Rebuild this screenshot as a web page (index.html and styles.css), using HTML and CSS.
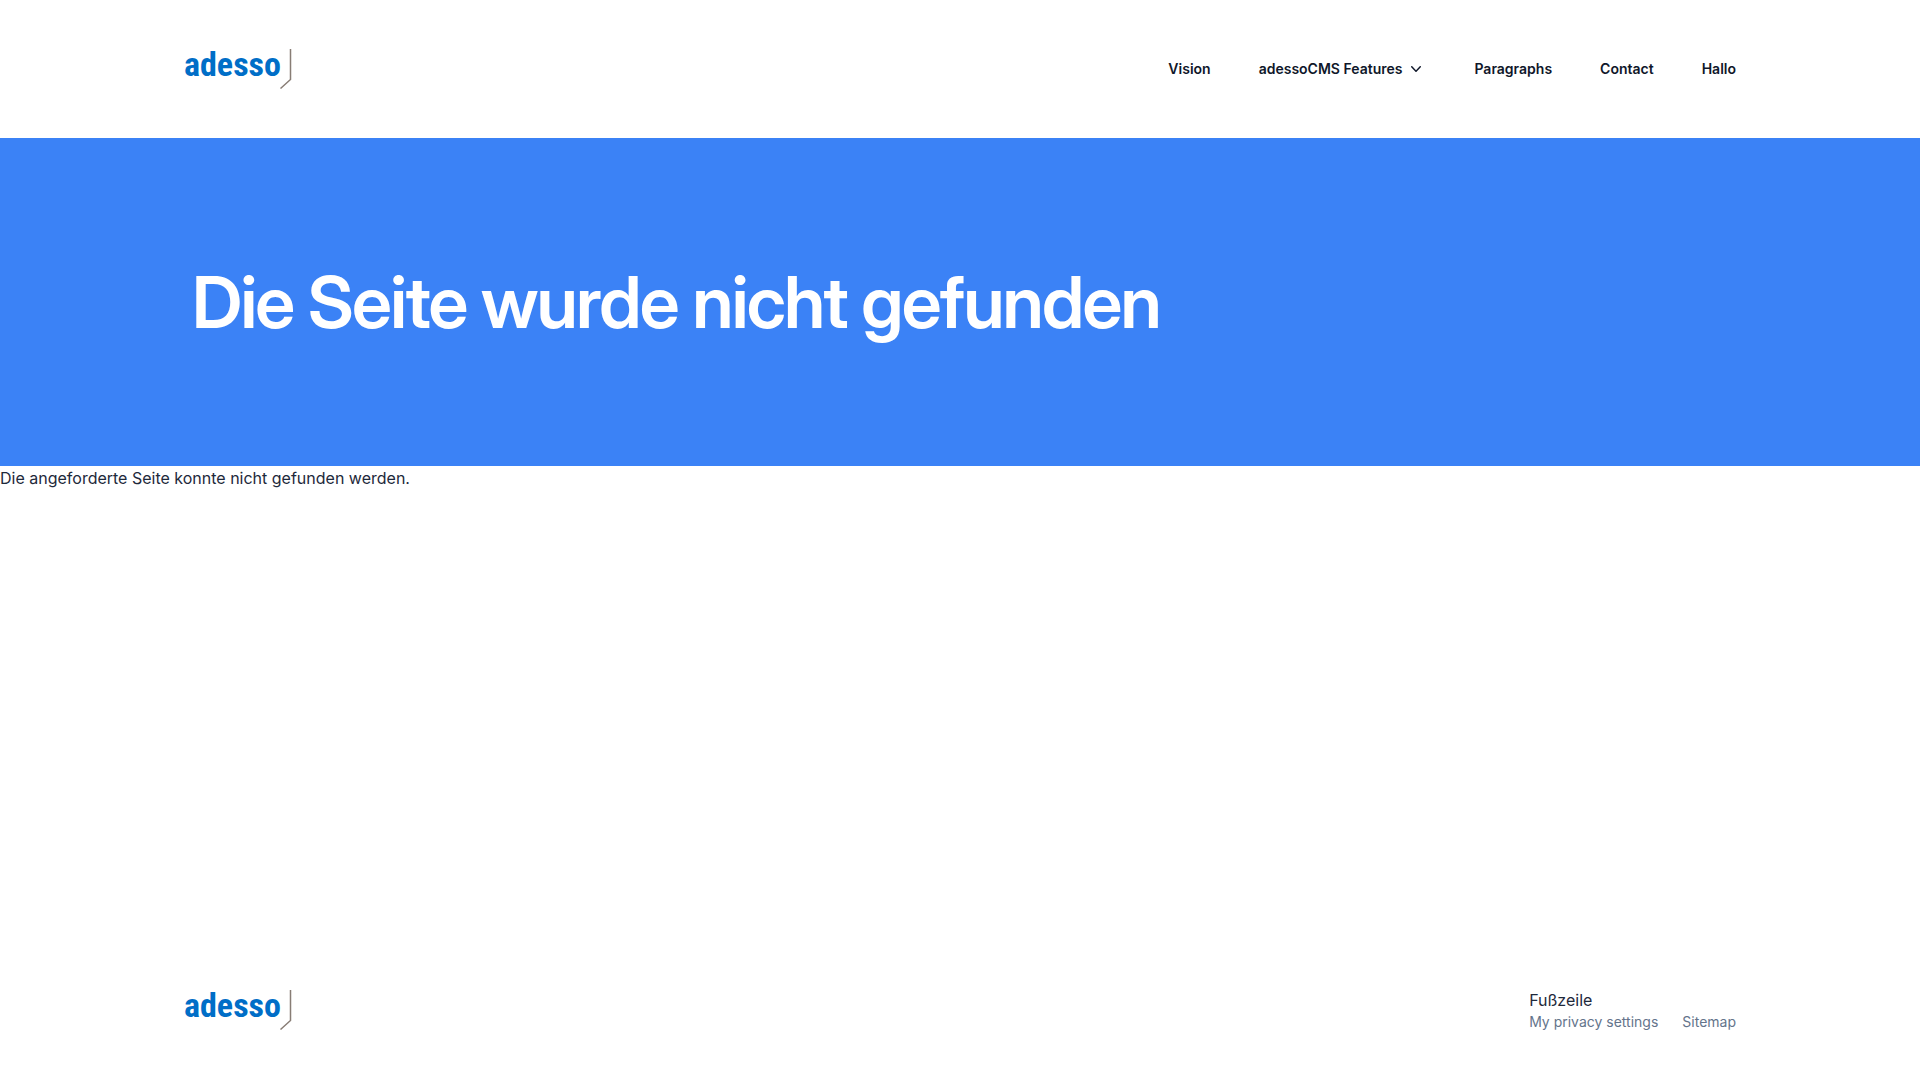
FILE: index.html
```html
<!DOCTYPE html>
<html lang="de">
<head>
<meta charset="utf-8">
<meta name="viewport" content="width=device-width, initial-scale=1">
<title>Die Seite wurde nicht gefunden</title>
<link rel="stylesheet" href="styles.css">
</head>
<body class="page">
<header class="container header">
  <a class="logo" href="#" aria-label="adesso">
    <svg class="logo-image" viewBox="0 0 108 40"><text class="logo-text" x="0" y="27">adesso</text><path class="logo-line" d="M106.500 0V30.500L96.500 39.500"/></svg>
  </a>
  <nav class="nav" aria-label="Hauptnavigation">
    <a class="nav-link" href="#">Vision</a>
    <button class="nav-link nav-toggle" type="button" aria-expanded="false">adessoCMS Features
      <svg class="chevron" viewBox="0 0 20 20" fill="currentColor" aria-hidden="true"><path fill-rule="evenodd" clip-rule="evenodd" d="M5.230 7.210a.75.75 0 011.060.020L10 11.168l3.710-3.938a.75.75 0 111.080 1.040l-4.250 4.500a.75.75 0 01-1.080 0l-4.250-4.500a.75.75 0 01.020-1.060z"/></svg>
    </button>
    <a class="nav-link" href="#">Paragraphs</a>
    <a class="nav-link" href="#">Contact</a>
    <a class="nav-link" href="#">Hallo</a>
  </nav>
</header>
<main class="main">
  <section class="hero">
    <div class="container"><h1 class="hero-title">Die Seite wurde nicht gefunden</h1></div>
  </section>
  <p class="message">Die angeforderte Seite konnte nicht gefunden werden.</p>
</main>
<footer class="container footer">
  <a class="logo" href="#" aria-label="adesso">
    <svg class="logo-image" viewBox="0 0 108 40"><text class="logo-text" x="0" y="27">adesso</text><path class="logo-line" d="M106.500 0V30.500L96.500 39.500"/></svg>
  </a>
  <nav class="footer-nav" aria-labelledby="footer-title">
    <h2 class="footer-title" id="footer-title">Fußzeile</h2>
    <div class="footer-links">
      <a class="footer-link" href="#">My privacy settings</a>
      <a class="footer-link" href="#">Sitemap</a>
    </div>
  </nav>
</footer>
</body>
</html>
```
FILE: styles.css
```css
* {
  box-sizing: border-box;
}

.page {
  display: flex;
  flex-direction: column;
  min-height: 100vh;
  margin: 0;
  background: #fff;
  color: #1e293b;
  font-family: Inter, sans-serif;
  font-size: 16px;
  line-height: 24px;
}

.container {
  width: 100%;
  max-width: 1600px;
  margin: 0 auto;
  padding: 0 24px;
}

.header,
.footer {
  display: flex;
  flex-wrap: wrap;
  align-items: center;
  justify-content: space-between;
  gap: 24px;
}

.header {
  padding-top: 49px;
  padding-bottom: 49px;
}

.logo,
.logo-image {
  display: block;
}

.logo-image {
  width: 108px;
  height: 40px;
  overflow: visible;
}

.logo-text {
  fill: #006ec7;
  font-family: "Roboto Condensed", Roboto, sans-serif;
  font-size: 34px;
  font-weight: 700;
}

.logo-line {
  fill: none;
  stroke: #887d75;
  stroke-width: 1.5;
}

.nav {
  display: flex;
  flex-wrap: wrap;
  align-items: center;
  gap: 8px 48px;
}

.nav-link {
  color: #0f172a;
  font-size: 14px;
  font-weight: 600;
  line-height: 24px;
  text-decoration: none;
}

.nav-toggle {
  display: flex;
  align-items: center;
  gap: 4px;
  padding: 0;
  border: 0;
  background: none;
  font-family: inherit;
  cursor: pointer;
}

.chevron {
  width: 20px;
  height: 20px;
}

.main {
  flex: 1;
}

.hero {
  padding: 128px 8px;
  background: #3b82f6;
}

.hero-title {
  margin: 0;
  padding: 0 8px;
  color: #fff;
  font-family: "Inter Display", Inter, sans-serif;
  font-size: 72px;
  font-weight: 600;
  line-height: 72px;
  letter-spacing: -0.025em;
}

.message {
  margin: 0;
}

.footer {
  padding-top: 48px;
  padding-bottom: 48px;
}

.footer-title {
  margin: 0;
  font-size: 16px;
  font-weight: 400;
  line-height: 24px;
}

.footer-links {
  display: flex;
  gap: 24px;
}

.footer-link {
  color: #64748b;
  font-size: 14px;
  line-height: 20px;
  text-decoration: none;
}
```
